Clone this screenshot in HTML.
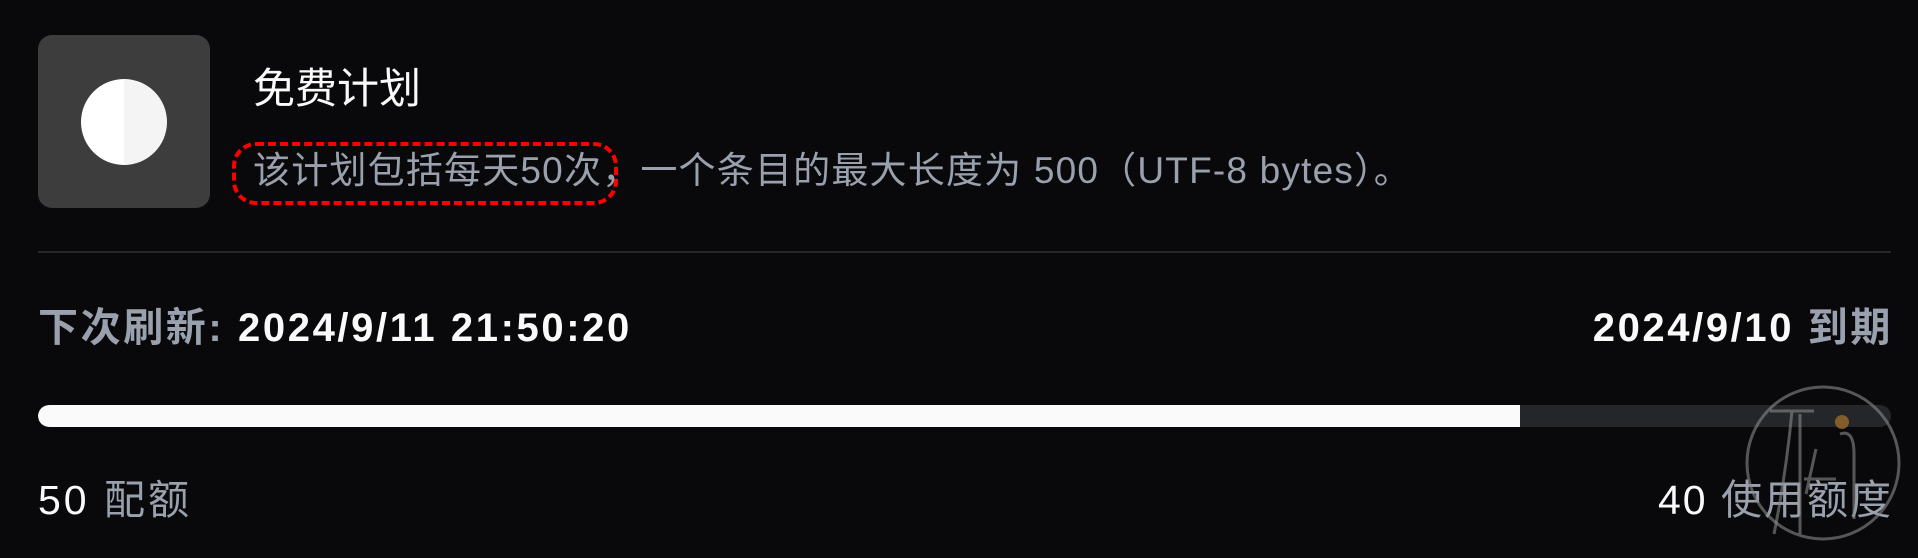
<!DOCTYPE html>
<html><head><meta charset="utf-8"><style>
html,body{margin:0;padding:0;background:#09090b;width:1918px;height:558px;overflow:hidden;font-family:"Liberation Sans","Noto Sans CJK SC",sans-serif;}
.t{position:absolute;white-space:nowrap;line-height:1;}
.g{color:#9aa1ae}
.w{color:#fafafa}
</style></head><body>
<div style="position:absolute;left:38px;top:35px;width:172px;height:173px;background:#3d3d3d;border-radius:14px;"></div>
<div style="position:absolute;left:81px;top:79px;width:86px;height:86px;border-radius:50%;background:linear-gradient(90deg,#fff 50%,#f4f4f4 50%);"></div>
<div class="t w" style="left:253px;top:68px;font-size:42px;">免费计划</div>
<div style="position:absolute;left:232px;top:142px;width:386px;height:63px;border:4px dashed #f00;border-radius:24px;box-sizing:border-box;"></div>
<div class="t g" style="left:253px;top:152px;font-size:37px;letter-spacing:1.2px;">该计划包括每天50次，一个条目的最大长度为 500（UTF-8 bytes）。</div>
<div style="position:absolute;left:38px;top:251px;width:1853px;height:2px;background:#27272a;"></div>
<div class="t" style="left:38px;top:308px;font-size:40px;font-weight:bold;letter-spacing:2.6px;"><span class="g">下次刷新:</span> <span class="w">2024/9/11 21:50:20</span></div>
<div class="t" style="right:25px;top:308px;font-size:40px;font-weight:bold;letter-spacing:2.6px;"><span class="w">2024/9/10</span> <span class="g">到期</span></div>
<div style="position:absolute;left:38px;top:405px;width:1853px;height:22px;background:#252629;border-radius:11px;overflow:hidden;">
<div style="width:1482px;height:22px;background:#fafafa;border-radius:11px 0 0 11px;"></div></div>
<div class="t" style="left:38px;top:480px;font-size:41px;letter-spacing:3px;"><span class="w">50</span> <span class="g">配额</span></div>
<div class="t" style="right:25px;top:480px;font-size:41px;letter-spacing:2px;"><span class="w">40</span> <span class="g">使用额度</span></div>
<svg style="position:absolute;left:1744px;top:384px" width="158" height="158" viewBox="0 0 158 158">
<g fill="none" stroke="#8a8a8a" stroke-opacity="0.6" stroke-width="3">
<circle cx="79" cy="79" r="76"/>
<path d="M26 27 H70 M48 27 Q42 90 30 150 M56 30 V150 M60 95 H92 M72 65 L62 110 M96 50 Q110 45 110 70 V135"/>
</g>
<circle cx="98" cy="38" r="7" fill="#9a6a2a" fill-opacity="0.8"/>
</svg>
</body></html>
